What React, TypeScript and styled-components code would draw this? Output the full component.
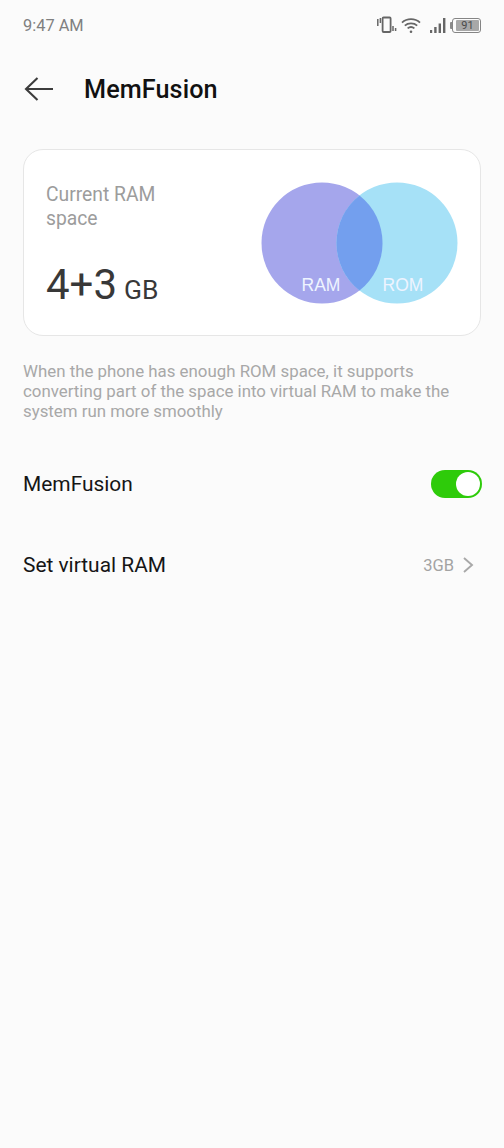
import React from "react";
import styled, { createGlobalStyle } from "styled-components";

const GlobalStyle = createGlobalStyle`
    html, body {
        margin: 0;
        padding: 0;
        background-color: #fbfbfb;
        font-family: Roboto, "Liberation Sans", sans-serif;
    }
`;

const Page = styled.div`
    width: 504px;
    height: 1148px;
    overflow: hidden;
    background-color: #fbfbfb;
    display: flex;
    flex-direction: column;
`;

const StatusBar = styled.div`
    height: 52px;
    padding: 0 23px;
    box-sizing: border-box;
    display: flex;
    align-items: flex-start;
    justify-content: space-between;
`;

const Clock = styled.span`
    margin-top: 17px;
    font-size: 16.4px;
    line-height: 18px;
    color: #808080;
`;

const StatusIcons = styled.div`
    margin-top: 16px;
    display: flex;
    align-items: center;
    gap: 4px;
`;

const StatusIcon = styled.svg<{ $after: number }>`
    flex: none;
    margin-right: ${(props) => props.$after}px;
`;

const BatteryCap = styled.div`
    width: 2px;
    height: 7px;
    margin-right: -4px;
    background-color: #8a8a8a;
    border-radius: 1px 0 0 1px;
`;

const Battery = styled.div`
    width: 29px;
    height: 15px;
    box-sizing: border-box;
    border: 1px solid #858585;
    border-radius: 3px;
    padding: 1px 1px 1px 3px;
    display: flex;
`;

const BatteryFill = styled.div`
    flex: 1;
    background-color: #a8a8a8;
    border-radius: 1px;
    font-size: 11px;
    line-height: 11px;
    text-align: center;
    color: #4a4a4a;
`;

const Header = styled.div`
    height: 74px;
    padding-left: 24px;
    display: flex;
    align-items: center;
    gap: 30px;
`;

const Title = styled.h1`
    margin: 0;
    font-size: 25.2px;
    font-weight: 500;
    color: #111;
    letter-spacing: 0.1px;
`;

const Card = styled.div`
    margin: 23px 23px 0;
    height: 187px;
    box-sizing: border-box;
    border: 1px solid #e6e6e6;
    border-radius: 20px;
    background-color: #fff;
    padding: 33px 22px 0;
    display: flex;
    justify-content: space-between;
`;

const CardInfo = styled.div`
    display: flex;
    flex-direction: column;
`;

const CardLabel = styled.div`
    width: 130px;
    font-size: 19.3px;
    line-height: 24px;
    color: #9c9c9c;
`;

const Amount = styled.div`
    margin-top: 29px;
    font-size: 42px;
    line-height: 50px;
    color: #383838;
`;

const Unit = styled.span`
    margin-left: 7px;
    font-size: 26.4px;
`;

const Venn = styled.svg`
    width: 198px;
    height: 122px;
    margin: -1px -1px 0 0;
    flex: none;
`;

const VennLabel = styled.text`
    font-family: "Liberation Sans", sans-serif;
    font-size: 17.5px;
    fill: #eef4ff;
`;

const Description = styled.p`
    margin: 25px 23px 0;
    font-size: 16.85px;
    line-height: 20px;
    color: #a8a8a8;
`;

const Row = styled.div<{ $top: number }>`
    margin-top: ${(props) => props.$top}px;
    padding: 0 22px 0 23px;
    height: 40px;
    display: flex;
    align-items: center;
    justify-content: space-between;
`;

const RowLabel = styled.span`
    font-size: 20.9px;
    color: #151515;
`;

const Toggle = styled.div`
    width: 51px;
    height: 28px;
    box-sizing: border-box;
    border-radius: 14px;
    background-color: #2ecb0a;
    padding: 2px;
    display: flex;
    justify-content: flex-end;
`;

const Knob = styled.div`
    width: 24px;
    height: 24px;
    border-radius: 50%;
    background-color: #fff;
`;

const RowValue = styled.div`
    margin-right: 8px;
    display: flex;
    align-items: center;
    gap: 8px;
    font-size: 16.5px;
    color: #a3a3a3;
`;

export default function App() {
    return (
        <Page>
            <GlobalStyle />
            <StatusBar>
                <Clock>9:47 AM</Clock>
                <StatusIcons>
                    <StatusIcon $after={0} width="20" height="18" viewBox="0 0 20 18" fill="none" stroke="#666">
                        <rect x="5.6" y="1.5" width="8" height="14.5" rx="1" strokeWidth="1.8" />
                        <path d="M.8 3v7M3.4 2v5M16 10v5M18.6 12v3" strokeWidth="1.5" />
                    </StatusIcon>
                    <StatusIcon $after={4} width="20" height="17" viewBox="0 0 20 17" fill="none" stroke="#666" strokeWidth="1.8">
                        <path d="M1 5.6c5-4.6 13-4.6 18 0M3.8 8.6c3.4-3 9-3 12.4 0M6.6 11.4c2-1.6 4.8-1.6 6.8 0" />
                        <circle cx="10" cy="14.8" r="1.3" fill="#666" stroke="none" />
                    </StatusIcon>
                    <StatusIcon $after={0} width="17" height="17" viewBox="0 0 17 17" fill="#666">
                        <rect x="1" y="13" width="2.2" height="3" />
                        <rect x="5.2" y="10" width="2.4" height="6" />
                        <rect x="9.6" y="6.5" width="2.4" height="9.5" />
                        <rect x="14" y="1" width="2.4" height="15" />
                    </StatusIcon>
                    <BatteryCap />
                    <Battery>
                        <BatteryFill>91</BatteryFill>
                    </Battery>
                </StatusIcons>
            </StatusBar>
            <Header>
                <svg width="30" height="26" viewBox="0 0 30 26" fill="none" stroke="#3c3c3c" strokeWidth="2.1">
                    <path d="M29 13H2M13.5 2 2 13l11.5 11" />
                </svg>
                <Title>MemFusion</Title>
            </Header>
            <Card>
                <CardInfo>
                    <CardLabel>Current RAM space</CardLabel>
                    <Amount>
                        4+3<Unit>GB</Unit>
                    </Amount>
                </CardInfo>
                <Venn viewBox="0 0 198 122">
                    <circle cx="61" cy="61" r="60.5" fill="#a5a6ec" />
                    <circle cx="136" cy="61" r="60.5" fill="#a6e1f7" />
                    <path d="M98.5 13.5a60.5 60.5 0 0 1 0 95a60.5 60.5 0 0 1 0-95z" fill="#739fee" />
                    <VennLabel x="60" y="109" textAnchor="middle">RAM</VennLabel>
                    <VennLabel x="142" y="109" textAnchor="middle">ROM</VennLabel>
                </Venn>
            </Card>
            <Description>
                When the phone has enough ROM space, it supports converting part of the space into virtual RAM to make the system run more smoothly
            </Description>
            <Row $top={43}>
                <RowLabel>MemFusion</RowLabel>
                <Toggle>
                    <Knob />
                </Toggle>
            </Row>
            <Row $top={41}>
                <RowLabel>Set virtual RAM</RowLabel>
                <RowValue>
                    3GB
                    <svg width="12" height="18" viewBox="0 0 12 18" fill="none" stroke="#a8a8a8" strokeWidth="1.9">
                        <path d="M2 2l8 7-8 7" />
                    </svg>
                </RowValue>
            </Row>
        </Page>
    );
}
